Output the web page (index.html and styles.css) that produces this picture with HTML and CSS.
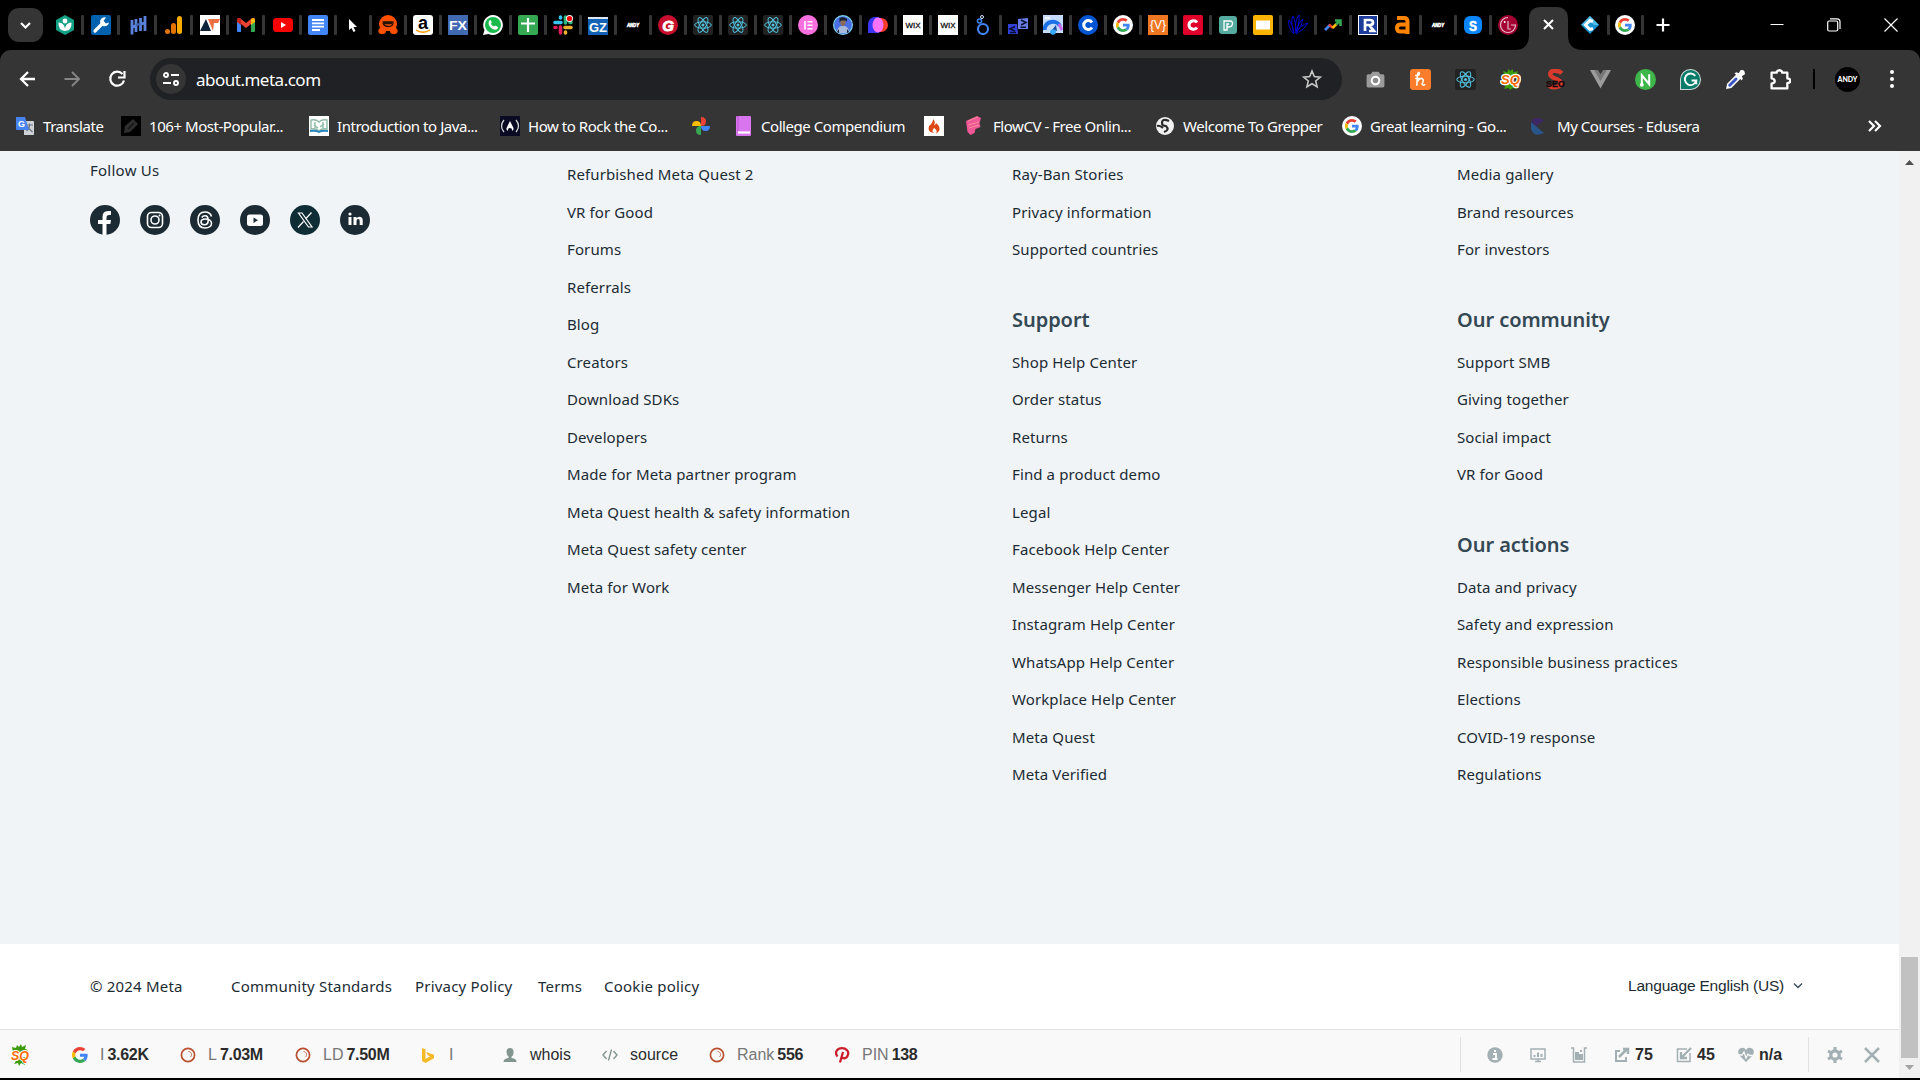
FILE: index.html
```html
<!DOCTYPE html>
<html lang="en">
<head>
<meta charset="utf-8">
<title>about.meta.com</title>
<link rel="stylesheet" href="styles.css">
</head>
<body>
<svg class="defs" aria-hidden="true">
  <symbol id="react" viewBox="0 0 20 20"><rect width="20" height="20" rx="2" fill="#222"/><g fill="none" stroke="#53c1de" stroke-width="1"><ellipse cx="10" cy="10" rx="8.3" ry="3.2"/><ellipse cx="10" cy="10" rx="8.3" ry="3.2" transform="rotate(60 10 10)"/><ellipse cx="10" cy="10" rx="8.3" ry="3.2" transform="rotate(120 10 10)"/></g><circle cx="10" cy="10" r="1.5" fill="#53c1de"/></symbol>
  <symbol id="g" viewBox="0 0 48 48"><path fill="#ea4335" d="M24 9.5c3.500 0 6.700 1.200 9.200 3.600l6.900-6.900C35.900 2.400 30.500 0 24 0 14.600 0 6.500 5.400 2.600 13.200l8 6.200C12.400 13.700 17.700 9.500 24 9.500z"/><path fill="#4285f4" d="M47 24.500c0-1.600-.2-3.100-.4-4.500H24v9h12.900c-.6 3-2.200 5.500-4.700 7.200l7.700 6C44.400 38 47 32 47 24.500z"/><path fill="#fbbc05" d="M10.500 28.600a14.500 14.500 0 0 1 0-9.200l-8-6.200a24 24 0 0 0 0 21.600z"/><path fill="#34a853" d="M24 48c6.500 0 11.900-2.100 15.900-5.800l-7.700-6c-2.200 1.500-4.900 2.300-8.200 2.300-6.300 0-11.600-4.200-13.500-9.900l-8 6.200C6.500 42.600 14.600 48 24 48z"/></symbol>
  <symbol id="google" viewBox="0 0 20 20"><circle cx="10" cy="10" r="10" fill="#fff"/><use href="#g" x="3" y="3" width="14" height="14"/></symbol>
  <symbol id="ring" viewBox="0 0 16 16"><circle cx="8" cy="8" r="6.600" fill="none" stroke="#b9502f" stroke-width="1.700"/><path d="M8.500 4.500c3 .2 4 3.500 2 5.500" fill="none" stroke="#c46a4d" stroke-width="1"/></symbol>
</svg>

<header class="tabstrip">
  <button class="tabsearch"><svg width="35" height="34" viewBox="0 0 35 34"><path d="m13 15 4.500 4.500L22 15" fill="none" stroke="#fff" stroke-width="2.200"/></svg></button>
  <div class="tabs">
    <span class="tab wide"><svg viewBox="0 0 20 20"><path d="M10 0l9 5v10l-9 5-9-5V5z" fill="#14a085"/><circle cx="10" cy="6" r="2.400" fill="#fff"/><path d="M3.500 7.500q5.500 0 6.500 6 1-6 6.500-6 .5 8-6.500 8.500-7-.5-6.500-8.500z" fill="#fff"/></svg></span>
    <span class="tab wide"><svg viewBox="0 0 20 20"><rect width="20" height="20" rx="2" fill="#0061af"/><path d="M4 16l8-8" stroke="#fff" stroke-width="3.200" stroke-linecap="round"/><path d="M15 2.500a4.500 4.500 0 1 0 3 5l-3 1-2.500-2.500z" fill="#fff"/></svg></span>
    <span class="tab wide"><svg viewBox="0 0 20 20"><path d="M4 5v14.500M8 4v13M12.500 3v13M17 1v15M4 12.500l4-2M12.500 9.500l4.500-2" stroke="#5b83dc" stroke-width="2.800"/><path d="M8 10.500l4.500-2" stroke="#3f62b4" stroke-width="2"/></svg></span>
    <span class="tab wide"><svg viewBox="0 0 20 20"><rect x="13" y="1" width="5" height="18" rx="2.500" fill="#f9ab00"/><rect x="7" y="8" width="5" height="11" rx="2.500" fill="#e37400"/><circle cx="3.500" cy="16.500" r="2.500" fill="#e37400"/></svg></span>
    <span class="tab wide"><svg viewBox="0 0 20 20"><path fill="#fff" d="M0 0h20v20H0z"/><path d="M6 4l5 12H0z" fill="#10233b"/><path d="M8 4h12l-2 4h-4l-1 8z" fill="#ee7042"/></svg></span>
    <span class="tab wide"><svg viewBox="0 0 20 20"><path fill="#4285f4" d="M1 5v10.500c0 1 .5 1.500 1.500 1.500H5V8z"/><path fill="#34a853" d="M19 5v10.500c0 1-.5 1.500-1.500 1.500H15V8z"/><path fill="#ea4335" d="M1 5c0-2 2-2.500 3.500-1.500L10 8l5.500-4.500C17 2.500 19 3 19 5l-4 4-5 4-5-4z"/><path fill="#fbbc04" d="M15 4l2-1c1.500 0 2 1 2 2v2l-4 3z"/><path fill="#c5221f" d="M1 5c0-1 .5-2 2-2l2 1v6L1 7z"/></svg></span>
    <span class="tab"><svg viewBox="0 0 20 20"><rect y="3" width="20" height="14" rx="3.500" fill="#f00"/><path d="M8 7l5 3-5 3z" fill="#fff"/></svg></span>
    <span class="tab"><svg viewBox="0 0 20 20"><rect width="20" height="20" rx="2" fill="#4285f4"/><path d="M4 5h12M4 8.300h12M4 11.600h12M4 15h8" stroke="#fff" stroke-width="1.800"/></svg></span>
    <span class="tab"><svg viewBox="0 0 20 20"><path d="M6 4v11l2.500-2 2 4 2-1-2-4H14z" fill="#fff"/></svg></span>
    <span class="tab"><svg viewBox="0 0 20 20"><path d="M1 9a9 9 0 0 1 18 0c0 2-1 3-1 4 3 2 2 7-3 6-2 0-3-1-3-3H8c0 2-1 3-3 3-5 1-6-4-3-6 0-1-1-2-1-4z" fill="#ff4f00"/><path d="M4.500 7H15v1.500q-.5 3-4.500 3-4.500 0-5.500-3.500M6 8.500h8" fill="none" stroke="#27120a" stroke-width="1.300"/></svg></span>
    <span class="tab"><svg viewBox="0 0 20 20"><rect width="20" height="20" rx="3" fill="#fff"/><text x="10" y="14" text-anchor="middle" class="t-bold" font-size="18">a</text><path d="M3 15c4 3 10 3 14 0" fill="none" stroke="#f90" stroke-width="1.500"/></svg></span>
    <span class="tab"><svg viewBox="0 0 20 20"><path fill="#426ab3" d="M0 0h20v20H0z"/><text x="10" y="15" text-anchor="middle" class="t-bold" font-size="13" textLength="18" lengthAdjust="spacingAndGlyphs" fill="#fff">FX</text></svg></span>
    <span class="tab"><svg viewBox="0 0 20 20"><path d="M10 0a10 10 0 1 1-4.500 19L0 20l1.500-5A10 10 0 0 1 10 0z" fill="#fff"/><circle cx="10" cy="10" r="8" fill="#19b94b"/><path d="M6.500 5.500c1-1 1.500 0 2.200 2L8 9c1 1.500 2 2 3 2.500l1.300-1L15 12c0 3-3 3.500-6 1.500-3-2-4.500-5.500-2.500-8z" fill="#fff"/></svg></span>
    <span class="tab"><svg viewBox="0 0 20 20"><rect width="20" height="20" rx="2" fill="#34a853"/><path d="M3 8.500h14M10 3v14" stroke="#fff" stroke-width="2.200"/></svg></span>
    <span class="tab"><svg viewBox="0 0 20 20"><g stroke-width="3.600" stroke-linecap="round"><path d="M2 7.500h6M7.500 2v1" stroke="#36c5f0"/><path d="M12.500 2v6M17 7.500h1" stroke="#2eb67d"/><path d="M12 12.500h6M12.500 17v1" stroke="#ecb22e"/><path d="M7.500 12v6M2 12.500h1" stroke="#e01e5a"/></g><circle cx="16.500" cy="3.500" r="3.500" fill="#fff"/><circle cx="16.500" cy="3.500" r="2.600" fill="#f00"/></svg></span>
    <span class="tab"><svg viewBox="0 0 20 20"><path fill="#1263b5" d="M0 2h20v18H0z"/><path fill="#dce8f4" d="M0 2h20v2H0z"/><text x="10" y="17" text-anchor="middle" class="t-bold" font-size="13" textLength="18" lengthAdjust="spacingAndGlyphs" fill="#fff">GZ</text></svg></span>
    <span class="tab"><svg viewBox="0 0 20 20"><text x="10" y="12" text-anchor="middle" class="t-bold" font-size="5" font-style="italic" textLength="12" lengthAdjust="spacingAndGlyphs" fill="#fff" stroke="#fff" stroke-width=".5">ANDY</text></svg></span>
    <span class="tab"><svg viewBox="0 0 20 20"><circle cx="10" cy="10" r="10" fill="#c8102e"/><text x="10" y="15.500" text-anchor="middle" class="t-bold" font-size="15" font-style="italic" fill="#fff" stroke="#fff" stroke-width=".8">G</text></svg></span>
    <span class="tab"><svg><use href="#react"/></svg></span>
    <span class="tab"><svg><use href="#react"/></svg></span>
    <span class="tab"><svg><use href="#react"/></svg></span>
    <span class="tab"><svg viewBox="0 0 20 20"><circle cx="10" cy="10" r="10" fill="#fb70df"/><path d="M7 6v8.500M9.500 6.800h5M9.500 10.200h5M9.500 13.700h5" stroke="#fff" stroke-width="1.600"/></svg></span>
    <span class="tab"><svg viewBox="0 0 20 20"><circle cx="10" cy="10" r="9.400" fill="#4a6fe3" stroke="#7fd3e6" stroke-width="1.200"/><path d="M4 16c1-4 3-5 6-5s5 1 6 5l-3 2H7z" fill="#a9b9dc"/><path d="M7.500 5h5v4q-2.500 4-5 0z" fill="#8f6a55"/><path d="M6.500 7.500V3q4-2 7.500 1v3l-1-1.500H8zM4 17l2-3v4zM16 17l-2-3v4z" fill="#172033"/></svg></span>
    <span class="tab"><svg viewBox="0 0 20 20"><path d="M0 18V9a7 7 0 0 1 7-7h4v16z" fill="#3b35f5"/><circle cx="13" cy="10" r="7" fill="#ff3b2a"/><ellipse cx="10" cy="10" rx="5.500" ry="7.500" fill="#ff73fa"/></svg></span>
    <span class="tab"><svg viewBox="0 0 20 20"><rect width="20" height="20" fill="#fff"/><text x="10" y="13" text-anchor="middle" class="t-sans" font-size="8" textLength="15" lengthAdjust="spacingAndGlyphs" fill="#111" stroke="#111" stroke-width=".3">WIX</text></svg></span>
    <span class="tab"><svg viewBox="0 0 20 20"><rect width="20" height="20" fill="#fff"/><text x="10" y="13" text-anchor="middle" class="t-sans" font-size="8" textLength="15" lengthAdjust="spacingAndGlyphs" fill="#111" stroke="#111" stroke-width=".3">WIX</text></svg></span>
    <span class="tab"><svg viewBox="0 0 20 20" fill="none" stroke="#4285f4"><circle cx="10" cy="14" r="5" stroke-width="2.200"/><circle cx="6.500" cy="6" r="2" stroke-width="1.500"/><circle cx="9" cy="2" r="1.500" stroke="#d6e4ff" stroke-width="1"/></svg></span>
    <span class="tab"><svg viewBox="0 0 20 20"><path fill="#3040d8" d="M0 9h9l1 10H0z"/><path fill="#697fe7" d="M10 4l10-1v11H10z"/><path d="M7 11.500L2 14l5 2M2 17.500h6M13 5l5 2.500-5 2.500M12.500 12.300H18" fill="none" stroke="#091130" stroke-width="1.500"/></svg></span>
    <span class="tab"><svg viewBox="0 0 20 20"><rect width="20" height="18" fill="#c5dcff"/><path d="M2 3h5" stroke="#fff" stroke-width="1.500"/><path d="M1.500 15C2 5.500 14 4.500 17 11" fill="none" stroke="#1b72e8" stroke-width="4"/><path d="M16 9l3 6" stroke="#c86be8" stroke-width="3"/><path d="M9 15l4-5 1 6z" fill="#174ea6"/><circle cx="10" cy="17" r="2.800" fill="#35aaff"/></svg></span>
    <span class="tab"><svg viewBox="0 0 20 20"><circle cx="10" cy="10" r="10" fill="#0056d2"/><path d="M14 7.500a4.500 4.500 0 1 0 0 5" fill="none" stroke="#fff" stroke-width="3"/></svg></span>
    <span class="tab"><svg><use href="#google"/></svg></span>
    <span class="tab"><svg viewBox="0 0 20 20"><path fill="#ef7623" d="M0 0h20v20H0z"/><text x="10" y="14" text-anchor="middle" class="t-sans" font-size="12" textLength="16" lengthAdjust="spacingAndGlyphs" fill="#fff">{V}</text></svg></span>
    <span class="tab"><svg viewBox="0 0 20 20"><rect width="20" height="20" rx="2" fill="#e00029"/><path d="M14 7.500c-2-3-8-2-8 2.500s6 5.500 8 2.500" fill="none" stroke="#fff" stroke-width="3"/></svg></span>
    <span class="tab"><svg viewBox="0 0 20 20"><rect x="1" y="1" width="18" height="18" rx="3" fill="#55aba0"/><path d="M6 15V6h6c4 0 3 6-1 6H9v3zM9 12V9h2" fill="none" stroke="#fff" stroke-width="1.300"/></svg></span>
    <span class="tab"><svg viewBox="0 0 20 20"><rect width="20" height="20" rx="2" fill="#f9b300"/><rect x="3" y="5.500" width="14" height="9" fill="#fff"/></svg></span>
    <span class="tab"><svg viewBox="0 0 20 20" fill="none" stroke="#0000d2" stroke-width="1"><path d="M6 19Q-1 12 1 5q4 5 5 13Q2 6 5 1q3 6 3 17Q6 6 11 0q1 7-3 18Q9 9 15 4q-1 8-7 14 4-8 12-10-4 7-12 11"/></svg></span>
    <span class="tab"><svg viewBox="0 0 20 20" fill="none" stroke-width="2.600"><path d="M2 15l5-5" stroke="#4285f4"/><path d="M6 9.500l4 3.500" stroke="#ea4335"/><path d="M9.500 13l4-4" stroke="#fbbc04"/><path d="M13 9.500l4-4M12 5.500h5.500V11" stroke="#34a853"/></svg></span>
    <span class="tab"><svg viewBox="0 0 20 20"><path fill="#fff" d="M0 0h20v20H0z"/><path fill="#1d3b9b" d="M1 1h18v18H1z"/><path d="M7 16V5h5c4 0 4 5 0 5H7m4 0 5 6h-5" fill="none" stroke="#fff" stroke-width="2.700"/></svg></span>
    <span class="tab"><svg viewBox="0 0 20 20"><path d="M4 3h7q3.500 0 3.500 3.500V19M14.500 9.500H7.500q-3.500 0-3.500 3.500t3.500 3.500h7" fill="none" stroke="#ff8500" stroke-width="4"/></svg></span>
    <span class="tab"><svg viewBox="0 0 20 20"><text x="10" y="12" text-anchor="middle" class="t-bold" font-size="5" font-style="italic" textLength="12" lengthAdjust="spacingAndGlyphs" fill="#fff" stroke="#fff" stroke-width=".5">ANDY</text></svg></span>
    <span class="tab"><svg viewBox="0 0 20 20"><rect x="1" y="1" width="18" height="18" rx="6" fill="#0b86fa"/><text x="10" y="15.500" text-anchor="middle" class="t-bold" font-size="15" textLength="8" lengthAdjust="spacingAndGlyphs" fill="#fff" stroke="#fff" stroke-width=".6">S</text></svg></span>
    <span class="tab last"><svg viewBox="0 0 20 20"><circle cx="10" cy="10" r="10" fill="#a50034"/><path d="M10 2.500a7.500 7.500 0 1 0 7.500 7.500H13M10 6v8h3" fill="none" stroke="#e5bfca" stroke-width="1.200"/><circle cx="6.700" cy="7" r="1" fill="#fff"/></svg></span>
  </div>
  <div class="active-tab"><svg width="69" height="43" viewBox="0 0 69 43"><path d="M0 43q15 0 15-15V12Q15 0 27 0h15q12 0 12 12v16q0 15 15 15z" fill="#353535"/><path d="M30 13l9 9M39 13l-9 9" stroke="#fff" stroke-width="2"/></svg></div>
  <div class="tabs">
    <span class="tab"><svg viewBox="0 0 20 20"><path d="M10 1l9 9-9 9-9-9z" fill="#1793d1"/><path d="M10 1l9 9h-5l-4-4-4 4-5 0z" fill="#55bde9"/><path d="M13 6.500l-3-1L5.500 10l4.500 4.500 3-1" fill="none" stroke="#fff" stroke-width="3"/></svg></span>
    <span class="tab"><svg><use href="#google"/></svg></span>
  </div>
  <svg class="newtab" width="20" height="20" viewBox="0 0 20 20"><path d="M10 3.500v13M3.500 10h13" stroke="#fff" stroke-width="2.200"/></svg>
  <div class="winctl">
    <svg width="14" height="14" viewBox="0 0 14 14"><path d="M.5 6.500h13" stroke="#fff"/></svg>
    <svg width="14" height="14" viewBox="0 0 14 14" fill="none" stroke="#fff" stroke-width="1.200"><rect x=".7" y="3" width="10" height="10" rx="1.500"/><path d="M3 .8h7q3 0 3 3V11"/></svg>
    <svg width="14" height="14" viewBox="0 0 14 14"><path d="M.5.5l13 13M13.500.5l-13 13" stroke="#fff" stroke-width="1.200"/></svg>
  </div>
</header>

<div class="chrome">
  <div class="toolbar">
    <div class="nav">
      <svg viewBox="0 0 20 20"><path d="M18 10H4m7-7-7 7 7 7" fill="none" stroke="#fff" stroke-width="2.300"/></svg>
      <svg viewBox="0 0 20 20"><path d="M2.500 10h14M10 3l7 7-7 7" fill="none" stroke="#868686" stroke-width="1.900"/></svg>
      <svg viewBox="0 0 20 20"><path d="M15.500 5A7 7 0 1 0 17 11.500M17.500 2v6.500H11" fill="none" stroke="#fff" stroke-width="2.200"/></svg>
    </div>
    <div class="omnibox">
      <span class="site"><svg width="16" height="14" viewBox="0 0 16 14" fill="none" stroke="#fff" stroke-width="1.900"><circle cx="3" cy="3" r="2"/><path d="M8 3h8M0 11h8"/><circle cx="13" cy="11" r="2"/></svg></span>
      <span class="url">about.meta.com</span>
      <svg class="star" width="20" height="20" viewBox="0 0 20 20"><path d="M10 2l2.300 5.600 6 .5-4.600 3.900 1.400 5.900-5.100-3.200-5.100 3.200L6.300 12 1.700 8.100l6-.5z" fill="none" stroke="#c7c7c7" stroke-width="1.600"/></svg>
    </div>
    <div class="exts">
      <svg viewBox="0 0 20 20"><path d="M3 5h2.500l1.500-2.500h6L14.500 5H17q1.500 0 1.500 2v9q0 1.500-1.500 1.500H3q-1.500 0-1.500-1.500V7Q1.500 5 3 5z" fill="#9b9b9b"/><circle cx="10" cy="11" r="3.600" fill="#8b8b8b" stroke="#fff" stroke-width="2"/></svg>
      <svg viewBox="0 0 20 20"><rect width="20" height="20" rx="3" fill="#fb7d2b"/><path d="M5 6q4 1 4-2-1-2-2 2l-.5 10M7 12q3-4 5-2.500 1.500 1-.5 5 1 2 3 0M5 9h7" fill="none" stroke="#fff" stroke-width="1.500"/></svg>
      <svg><use href="#react"/></svg>
      <svg viewBox="0 0 20 20"><path d="M4 6L3 2l4 1 1-3 2 2 2-2 1 3 4-1-1 4 2 2H2zM3 14l2 2-1 3 4-1 2 2 2-2 4 1-1-3 2-2z" fill="#3c9a0b"/><text x="10" y="14.500" text-anchor="middle" class="t-bold" font-size="12.500" font-style="italic" textLength="18" lengthAdjust="spacingAndGlyphs" fill="#ff6b00" stroke="#fff" stroke-width="2.500" paint-order="stroke">SQ</text></svg>
      <svg viewBox="0 0 20 20"><path d="M16 4C13 1 5 .5 5 5s10 4 10 8-6 6-11 3" fill="none" stroke="#d83a2c" stroke-width="4.200"/><text x="10" y="17.500" text-anchor="middle" class="t-bold" font-size="8.500" textLength="18" lengthAdjust="spacingAndGlyphs" fill="#160807" stroke="#160807" stroke-width=".3">SEO</text></svg>
      <svg viewBox="0 0 20 20"><path d="M0 1h5l5 9 5-9h5L10 18.500z" fill="#9b9b9b"/><path d="M4 1h3.500L10 5l2.500-4H16L10 11.500z" fill="#777"/></svg>
      <svg viewBox="0 0 20 20"><circle cx="10" cy="10" r="10" fill="#3eb649"/><path d="M6.500 15V6l7 8.500V5" fill="none" stroke="#fff" stroke-width="1.900"/><circle cx="6.500" cy="15" r="1.800" fill="#fff"/></svg>
      <svg viewBox="0 0 20 20"><path d="M.5 10A9.500 9.500 0 1 1 10 19.500H.5z" fill="#087c68" stroke="#ccd9d6"/><path d="M14.500 6.500a5.500 5.500 0 1 0 1 4.500H11m4.500-.5v4" fill="none" stroke="#fff" stroke-width="1.800"/></svg>
      <svg viewBox="0 0 20 20"><path d="M1 19l1-5L11 5l4 4-9 9z" fill="#fff"/><path d="M4.500 15.500l6-6" stroke="#3a54c4" stroke-width="2.800" stroke-linecap="round"/><path d="M9 4l2-1 2 1 2-3q4-1 4 4l-3 2 1 2-1 2z" fill="#fff"/></svg>
      <svg viewBox="0 0 20 20"><path d="M1.500 3.500h5v-1q2.500-2.500 5 0v1h5v5.500q3 .3 3 2.200t-3 2.300v5h-15v-4.500q3-.5 3-2.500t-3-2.500z" fill="none" stroke="#fff" stroke-width="2.200" stroke-linejoin="round"/></svg>
    </div>
    <i class="tdiv"></i>
    <span class="avatar">ANDY</span>
    <svg class="dots" width="6" height="20" viewBox="0 0 6 20" fill="#fff"><circle cx="3" cy="3" r="2"/><circle cx="3" cy="10" r="2"/><circle cx="3" cy="17" r="2"/></svg>
  </div>
  <nav class="bookmarks">
    <a><svg viewBox="0 0 20 20"><path d="M9 5h9q1 0 1 1v12q0 1-1 1H9z" fill="#cfd2d6"/><path d="M11 9h7M14.500 7.500V9q0 4-3 6m1-4 5 5" fill="none" stroke="#6c7480" stroke-width="1.200"/><path d="M1 1h9l4 13H2q-1 0-1-1z" fill="#4783ed"/><text x="6.500" y="11" text-anchor="middle" class="t-bold" font-size="9" fill="#fff">G</text></svg>Translate</a>
    <a><svg viewBox="0 0 20 20"><path d="M0 0h20v20H0z"/><path d="M3 17l1-7 8-7 5 5-8 8z" fill="#2e2e2e"/><path d="M7 13l6-6" stroke="#111" stroke-width="1.200"/></svg>106+ Most-Popular...</a>
    <a><svg viewBox="0 0 20 20"><path fill="#fff" d="M0 0h20v20H0z"/><path d="M2 4q5-1 8 2 3-3 8-2v9q-5-1-8 2-3-3-8-2zM6 6v6m8-6v6M5 9l4 3m6-4-4 3" fill="none" stroke="#90bba6" stroke-width="1.400"/><path d="M1 15q6-1 9 1 3-2 9-1" fill="none" stroke="#2786bc" stroke-width="2"/></svg>Introduction to Java...</a>
    <a><svg viewBox="0 0 20 20"><path fill="#0a0a23" d="M0 0h20v20H0z"/><path d="M4 4q-5 6 0 12M16 4q5 6 0 12" fill="none" stroke="#ddd" stroke-width="1.200"/><path d="M10 5l3.500 7q.5 2-1.500 3 .5-3-2-3t-2 3q-2-1-1.500-3z" fill="#fff"/></svg>How to Rock the Co...</a>
    <a><svg viewBox="0 0 20 20"><path d="M10 1q5 0 5 4.500T10 10z" fill="#ea4335"/><path d="M19 10q0 5-4.500 5-4.500 0-4.500-5z" fill="#4285f4"/><path d="M10 19q-5 0-5-4.500T10 10z" fill="#34a853"/><path d="M1 10q0-5 4.500-5T10 10z" fill="#fbbc04"/></svg></a>
    <a><svg viewBox="0 0 20 20"><rect x="3" width="15" height="20" rx="1" fill="#d975ef"/><path d="M5 16.500h12" stroke="#fff" stroke-width="2.200"/><path d="M5 0v15" stroke="#bd52d6"/></svg>College Compendium</a>
    <a><svg viewBox="0 0 20 20"><path fill="#fff" d="M0 0h20v20H0z"/><path d="M9 3q3 3 1 6 2 0 2-2 5 4 3 8l-3 3q2-4-2-6-3 3 0 5-7-1-5-7 4-3 4-7z" fill="#dd4814"/></svg></a>
    <a><svg viewBox="0 0 20 20"><path d="M1 5L12 0l4 2-1.500 5 1 4-5 2-1 4-4 2-3-3z" fill="#ef5795"/><path d="M3 5l10-4M3 9l11-3M4 12l10-3" stroke="#ff8c9a" stroke-width="1"/></svg>FlowCV - Free Onlin...</a>
    <a><svg viewBox="0 0 20 20"><circle cx="10" cy="10" r="9" fill="#f1f1f1"/><path d="M14 5q-7-3-7 2 0 3 4 3 4 4-2 6M2 10q3-1 6 2" fill="none" stroke="#2b2b2b" stroke-width="2.200"/></svg>Welcome To Grepper</a>
    <a><svg><use href="#google"/></svg>Great learning - Go...</a>
    <a><svg viewBox="0 0 20 20"><path d="M15 4L8 10 2 6q4-7 13-2z" fill="#3e2765"/><path d="M2 6l13 11Q5 22 2 13z" fill="#29558b"/></svg>My Courses - Edusera</a>
    <svg class="more" viewBox="0 0 20 20"><path d="M4 5l5 5-5 5M10 5l5 5-5 5" fill="none" stroke="#fff" stroke-width="2.200"/></svg>
  </nav>
</div>

<div class="viewport">
  <main class="page">
    <section class="footer">
      <div class="follow">
        <h3>Follow Us</h3>
        <div class="social">
          <svg viewBox="0 0 30 30"><circle cx="15" cy="15" r="15" fill="#1c2b33"/><path d="M12.500 30V19H8v-4h4.500v-3q0-6 5.500-6h3v4h-2q-2.500 0-2.500 2.500V15H21l-.7 4H16.500v11z" fill="#fff"/></svg>
          <svg viewBox="0 0 30 30"><circle cx="15" cy="15" r="15" fill="#1c2b33"/><g fill="none" stroke="#fff" stroke-width="1.600"><rect x="7.500" y="7.500" width="15" height="15" rx="4"/><circle cx="15" cy="15" r="4"/></g><circle cx="19.500" cy="10.500" r="1" fill="#fff"/></svg>
          <svg viewBox="0 0 30 30"><circle cx="15" cy="15" r="15" fill="#1c2b33"/><path d="M21.500 11.500C20.500 8 18 7 15 7c-5 0-7 3.500-7 8s2 8 7 8c4 0 6.500-2 6.500-4.500 0-3-3-4.500-6-4.500s-4.500 1-4.500 3 1.800 2.700 3.500 2.700c3 0 3.700-2 3.700-4.500 0-3-1-4.400-3.200-4.400-1.500 0-2.500.6-3.200 1.700" fill="none" stroke="#fff" stroke-width="1.600"/></svg>
          <svg viewBox="0 0 30 30"><circle cx="15" cy="15" r="15" fill="#1c2b33"/><rect x="7" y="9.500" width="16" height="11.500" rx="2.500" fill="#fff"/><path d="M13.500 12.500l4.500 2.700-4.500 2.700z" fill="#1c2b33"/></svg>
          <svg viewBox="0 0 30 30"><circle cx="15" cy="15" r="15" fill="#0f2d35"/><path d="M8.500 8h3.500l10 14h-3.500zM21.500 7.500l-6 6.500m-2 2.500L8 22.500" fill="none" stroke="#fff" stroke-width="1.200"/></svg>
          <svg viewBox="0 0 30 30"><circle cx="15" cy="15" r="15" fill="#1c2b33"/><path d="M8.500 12h3v8h-3zM13.500 12h3v1.200q1-1.500 3-1.500 3.200 0 3.200 3.500V20h-3v-4q0-1.900-1.500-1.900-1.700 0-1.700 1.900v4h-3z" fill="#fff"/><circle cx="10" cy="9" r="1.600" fill="#fff"/></svg>
        </div>
      </div>
      <div class="col">
        <ul><li>Refurbished Meta Quest 2</li><li>VR for Good</li><li>Forums</li><li>Referrals</li><li>Blog</li><li>Creators</li><li>Download SDKs</li><li>Developers</li><li>Made for Meta partner program</li><li>Meta Quest health &amp; safety information</li><li>Meta Quest safety center</li><li>Meta for Work</li></ul>
      </div>
      <div class="col">
        <ul><li>Ray-Ban Stories</li><li>Privacy information</li><li>Supported countries</li></ul>
        <h2>Support</h2>
        <ul><li>Shop Help Center</li><li>Order status</li><li>Returns</li><li>Find a product demo</li><li>Legal</li><li>Facebook Help Center</li><li>Messenger Help Center</li><li>Instagram Help Center</li><li>WhatsApp Help Center</li><li>Workplace Help Center</li><li>Meta Quest</li><li>Meta Verified</li></ul>
      </div>
      <div class="col">
        <ul><li>Media gallery</li><li>Brand resources</li><li>For investors</li></ul>
        <h2>Our community</h2>
        <ul><li>Support SMB</li><li>Giving together</li><li>Social impact</li><li>VR for Good</li></ul>
        <h2>Our actions</h2>
        <ul><li>Data and privacy</li><li>Safety and expression</li><li>Responsible business practices</li><li>Elections</li><li>COVID-19 response</li><li>Regulations</li></ul>
      </div>
    </section>
    <section class="legal">
      <span>© 2024 Meta</span><span>Community Standards</span><span>Privacy Policy</span><span>Terms</span><span>Cookie policy</span>
      <span class="lang">Language English (US)</span>
      <svg width="10" height="8" viewBox="0 0 10 8"><path d="M1 1.500l4 4 4-4" fill="none" stroke="#344854" stroke-width="1.300"/></svg>
    </section>
    <section class="seobar">
      <svg class="sqlogo" viewBox="0 0 20 22"><path d="M3 8L2 3l4 1 1-3 2 2 2-3 1 3 4-2-1 4 3 1-2 3zM4 15l2 2-2 3 4-1 1 3 2-3 4 2-1-3 3-1-2-4z" fill="#3c9a0b"/><text x="10" y="15.500" text-anchor="middle" class="t-bold" font-size="12.500" font-style="italic" textLength="18" lengthAdjust="spacingAndGlyphs" fill="#ff6b00" stroke="#fff" stroke-width="2" paint-order="stroke">SQ</text></svg>
      <div class="metrics">
        <span><svg><use href="#g"/></svg>I<b>3.62K</b></span>
        <span><svg><use href="#ring"/></svg>L<b>7.03M</b></span>
        <span><svg><use href="#ring"/></svg>LD<b>7.50M</b></span>
        <span><svg viewBox="0 0 16 16"><path d="M1 1l3.500 1.200V12L9 9.300 6.700 8.200 5.300 5 13 7.700v3.600L4.500 16 1 14z" fill="#f5ba27"/></svg>I</span>
        <span class="dark"><svg viewBox="0 0 16 16"><path d="M4.500 5q0-4 3.500-4t3.500 4-2 4.500v1.500q5 .5 5 4h-13q0-3.500 5-4V9.500Q4.500 8 4.500 5z" fill="#83958f"/></svg>whois</span>
        <span class="dark"><svg viewBox="0 0 16 16"><path d="M4.500 4L1 8l3.500 4M11.500 4L15 8l-3.500 4M9.500 2.500l-3 11" fill="none" stroke="#83958f" stroke-width="1.400"/></svg>source</span>
        <span><svg><use href="#ring"/></svg>Rank<b>556</b></span>
        <span><svg viewBox="0 0 16 16"><path d="M3.500 9.500C0 5 3.500 1.200 8 1.200s7 3.200 6 6.300c-1 4.500-5 4.500-6 2.500M9 5L6 15.500" fill="none" stroke="#cb1f2c" stroke-width="2.300"/></svg>PIN<b>138</b></span>
      </div>
      <div class="tools">
        <svg viewBox="0 0 16 16"><circle cx="8" cy="8" r="7.700" fill="#a2afb3"/><path d="M6 7h3v5m-3.500 0h5M7 4h2" fill="none" stroke="#fff" stroke-width="1.800"/></svg>
        <svg viewBox="0 0 16 16"><path d="M1 2h14v10H1zM5 14.500h6M8 12v2" fill="none" stroke="#a2afb3" stroke-width="1.500"/><path d="M4.500 10V8m3.500 2V5.500m3.500 4.500V7" stroke="#a2afb3" stroke-width="2"/></svg>
        <svg viewBox="0 0 16 16"><path d="M0 1h2.500v14h11V1H16" fill="none" stroke="#a2afb3" stroke-width="1.500"/><path d="M4 5h4v2h4v6H4zM9 3h2v2H9z" fill="#a2afb3"/></svg>
        <span><svg viewBox="0 0 16 16"><path d="M6 4H2v10h10v-4" fill="none" stroke="#a2afb3" stroke-width="2"/><path d="M5 10l8-8M9 2h5v5" fill="none" stroke="#a2afb3" stroke-width="2.500"/></svg><b>75</b></span>
        <span><svg viewBox="0 0 16 16"><path d="M11 2H1.500v12.500H14V6" fill="none" stroke="#a2afb3" stroke-width="1.500"/><path d="M15 1L6 10M5 5v6h6" fill="none" stroke="#a2afb3" stroke-width="2.300"/></svg><b>45</b></span>
        <span><svg viewBox="0 0 16 16"><path d="M8 15L1 8Q-1 3 2 1.500 6-.5 8 3q2-3.500 6-1.500 3 1.500 1 6.500z" fill="#a2afb3"/><path d="M0 8h4l2-3 2 6 2-4 1.500 1.500H16" fill="none" stroke="#fafafa" stroke-width="1.300"/></svg><b>n/a</b></span>
      </div>
      <div class="actions">
        <svg viewBox="0 0 16 16"><circle cx="8" cy="8" r="4.200" fill="none" stroke="#a2afb3" stroke-width="3.200"/><path d="M8 0v3M8 13v3M1 4l2.700 1.500M12.300 10.500L15 12M1 12l2.700-1.500M12.300 5.500L15 4" stroke="#a2afb3" stroke-width="3"/></svg>
        <svg viewBox="0 0 16 16"><path d="M1 1l14 14M15 1L1 15" stroke="#a2afb3" stroke-width="2.500"/></svg>
      </div>
    </section>
  </main>
  <aside class="scrollbar">
    <svg width="9" height="5" viewBox="0 0 9 5"><path d="M4.500 0L9 5H0z" fill="#505050"/></svg>
    <i class="thumb"></i>
    <svg width="9" height="5" viewBox="0 0 9 5"><path d="M4.500 5L9 0H0z" fill="#a3a3a3"/></svg>
  </aside>
</div>
</body>
</html>
```
FILE: styles.css
```css
* { box-sizing: border-box; }
html, body { margin: 0; height: 100%; }
body {
  width: 1920px;
  height: 1080px;
  overflow: hidden;
  background: #000;
  font-family: "Noto Sans", "Open Sans", sans-serif;
}
svg { display: block; flex: none; }
.defs { display: none; }
.t-bold { font-family: "Liberation Sans", sans-serif; font-weight: 700; letter-spacing: 0; }
.t-sans { font-family: "Liberation Sans", sans-serif; }

/* Tab strip */
.tabstrip { display: flex; height: 50px; padding-left: 8px; }
.tabsearch { width: 35px; height: 34px; margin: 8px 12px 0 0; padding: 0; border: 0; border-radius: 11px; background: #353535; }
.tabs { display: flex; height: 50px; }
.tab { display: flex; align-items: center; width: 35px; }
.tab.wide { width: 36.25px; }
.tab svg { width: 20px; height: 20px; }
.tab::after { content: ""; width: 3px; height: 20px; margin-left: 6px; border-radius: 1px; background: #353535; }
.tab.last { width: 20px; }
.tab.last::after { display: none; }
.active-tab { width: 69px; height: 43px; margin: 7px -3px 0 -4px; }
.active-tab + .tabs .tab:first-child::after { margin-left: 7px; }
.newtab { margin: 15px 0 0 3px; }
.winctl { display: flex; gap: 43px; margin: 18px 22px 0 auto; }

/* Toolbar */
.chrome { height: 101px; border-radius: 11px 11px 0 0; background: #353535; }
.toolbar { display: flex; align-items: center; height: 58px; padding-left: 17px; }
.nav { display: flex; gap: 25px; width: 133px; }
.nav svg { width: 20px; height: 20px; }
.omnibox { display: flex; align-items: center; width: 1192px; height: 42px; padding: 0 20px 0 6px; border-radius: 21px; background: #202124; }
.site { display: grid; place-items: center; width: 30px; height: 30px; margin-right: 10px; border-radius: 50%; background: #353535; }
.url { flex: 1; color: #fff; font-size: 17px; letter-spacing: -.5px; }
.exts { display: flex; gap: 24px; margin-left: 23px; }
.exts svg { width: 21px; height: 21px; }
.tdiv { width: 2px; height: 20px; margin-left: 22px; background: #000; }
.avatar { display: grid; place-items: center; width: 25px; height: 25px; margin: 0 29px 0 20px; border-radius: 50%; background: #000; color: #fff; font: 900 7px "Lato", sans-serif; }
.dots { width: 6px; }

/* Bookmarks */
.bookmarks {
  display: grid;
  grid-template-columns: 106px 188px 191px 191px 42px 191px 41px 190px 187px 187px 336px 20px;
  align-items: center;
  height: 36px;
  padding: 0 0 1px 15px;
}
.bookmarks a { display: flex; align-items: center; gap: 8px; color: #fff; font-size: 15px; white-space: nowrap; letter-spacing: -.45px; }
.bookmarks svg { width: 20px; height: 20px; }

/* Page */
.viewport { display: flex; height: 927px; }
.page { width: 1899px; }
.footer { display: grid; grid-template-columns: 477px 445px 445px 1fr; height: 793px; padding: 5px 0 0 90px; background: #f0f4f7; color: #1c2b33; }
.follow h3 { height: 30px; margin: 0 0 19px; font-size: 15px; font-weight: 400; line-height: 28px; letter-spacing: .25px; }
.social { display: flex; gap: 20px; }
.social svg { width: 30px; height: 30px; }
.col ul { margin: 0; padding: 0; list-style: none; }
.col li { height: 37.5px; font-size: 15px; line-height: 37.5px; letter-spacing: .11px; white-space: nowrap; }
.col h2 { height: 75px; margin: 0; padding-top: 36px; color: #344854; font-size: 20px; font-weight: 600; line-height: 30px; letter-spacing: -.05px; }
.legal { display: grid; grid-template-columns: 141px 184px 123px 66px 1024px 165px 10px; align-items: center; height: 85px; padding: 0 0 2px 90px; background: #fff; color: #1c2b33; font-size: 15px; letter-spacing: .2px; white-space: nowrap; }
.lang { font-family: "Liberation Sans", sans-serif; font-size: 15.5px; letter-spacing: -.2px; }

/* SEO bar */
.seobar { display: flex; align-items: center; height: 49px; padding-top: 1px; border-top: 1px solid #dfe1e2; background: #f9f9f9; color: #777; font: 16px "Liberation Sans", sans-serif; }
.seobar b { color: #2b2b2b; }
.sqlogo { width: 20px; height: 22px; margin: 0 42px 0 10px; }
.metrics { display: grid; grid-template-columns: 108px 115px 126px 81px 100px 107px 125px 100px; width: 1388px; }
.metrics span, .tools span { display: flex; align-items: center; }
.metrics svg { width: 16px; height: 16px; margin: 1px 12px 0 0; }
.metrics b { margin-left: 3px; letter-spacing: -.3px; }
.metrics .dark { color: #2b2b2b; }
.tools svg, .actions svg { width: 16px; height: 16px; margin-top: 1px; }
.tools { display: grid; grid-template-columns: 43px 41px 43px 62px 62px 1fr; align-items: center; width: 348px; height: 35px; padding-left: 26px; border-left: 1px solid #dfe1e2; }
.tools b { margin-left: 5px; }
.actions { display: flex; align-items: center; gap: 21px; height: 35px; padding-left: 18px; border-left: 1px solid #dfe1e2; }

/* Scrollbar */
.scrollbar { display: flex; flex-direction: column; align-items: center; width: 21px; padding: 9px 0 8px; background: #f1f1f1; }
.thumb { width: 17px; height: 101px; margin: auto 0 7px; background: #c1c1c1; }
```
